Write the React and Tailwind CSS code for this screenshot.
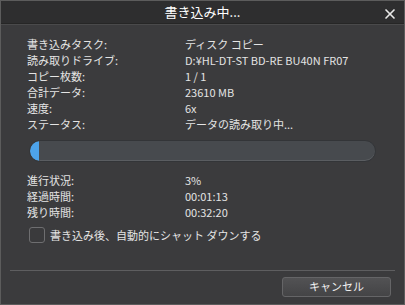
import { X } from "lucide-react";

const INFO = [
  ["書き込みタスク:", "ディスク コピー"],
  ["読み取りドライブ:", "D:¥HL-DT-ST BD-RE BU40N FR07"],
  ["コピー枚数:", "1 / 1"],
  ["合計データ:", "23610 MB"],
  ["速度:", "6x"],
  ["ステータス:", "データの読み取り中..."],
];

const PROGRESS = [
  ["進行状況:", "3%"],
  ["経過時間:", "00:01:13"],
  ["残り時間:", "00:32:20"],
];

function Row({ label, value }) {
  return (
    <div className="flex h-4 items-center">
      <span className="w-[158px] shrink-0">{label}</span>
      <span>{value}</span>
    </div>
  );
}

export default function App() {
  return (
    <div
      className="flex h-[305px] w-[405px] flex-col border border-[#5c5c5c] bg-[#3b3b3d] text-[11px] text-[#e4e4e4]"
      style={{ fontFamily: '"Noto Sans CJK JP", "Liberation Sans", sans-serif' }}
    >
      {/* title bar */}
      <div className="relative flex h-[23px] shrink-0 items-center justify-center border-b border-[#262626] bg-[#2e2e2f] text-[13px] text-white">
        書き込み中...
        <X className="absolute right-[6px] top-[5px] h-4 w-4 text-[#e8e8e8]" strokeWidth={2.5} />
      </div>
      <div className="h-px shrink-0 bg-[#4a4a4b]" />

      <div className="flex flex-1 flex-col px-[26px] pt-[11px]">
        {INFO.map(([l, v]) => (
          <Row key={l} label={l} value={v} />
        ))}

        <div className="mt-[8px] ml-[2px] mr-[2px] h-[22px] overflow-hidden rounded-full border border-[#333538] bg-[#474a4e] shadow-[inset_0_-1px_0_#5a5d61]">
          <div className="h-full w-[9px] rounded-l-full bg-[#4da3ea]" />
        </div>

        <div className="mt-[10px]">
          {PROGRESS.map(([l, v]) => (
            <Row key={l} label={l} value={v} />
          ))}
        </div>

        <label className="mt-[7px] ml-[2px] flex items-center gap-[5px]">
          <span className="h-4 w-4 rounded-[3px] border border-[#6e6e70] bg-[#3a3a3c]" />
          <span>書き込み後、自動的にシャット ダウンする</span>
        </label>

        <div className="mt-[26px] -mx-[17px] h-px bg-[#5e5e60]" />

        <div className="mt-[6px] flex justify-end -mr-[13px]">
          <button
            type="button"
            className="h-[20px] w-[109px] rounded-[3px] border border-[#656567] bg-gradient-to-b from-[#525254] to-[#444446] text-[11px] text-[#f0f0f0]"
          >
            キャンセル
          </button>
        </div>
      </div>
    </div>
  );
}
